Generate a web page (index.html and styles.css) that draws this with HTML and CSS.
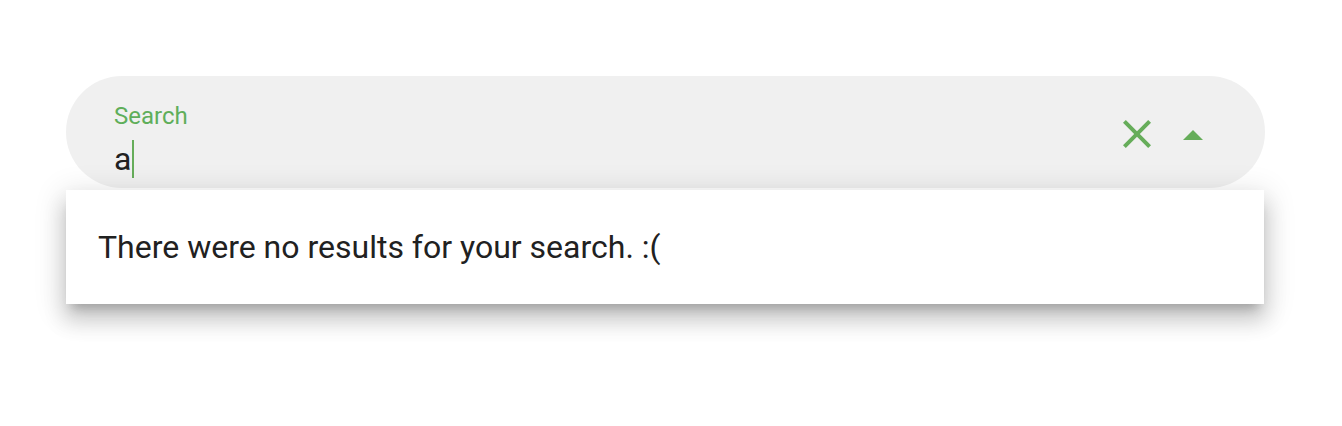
FILE: index.html
```html
<!DOCTYPE html>
<html lang="en">
<head>
<meta charset="utf-8">
<title>Search</title>
<link rel="stylesheet" href="styles.css">
</head>
<body>
<div class="page">
  <div class="field">
    <div class="field-main">
      <label class="field-label">Search</label>
      <div class="field-input"><span class="typed">a</span><span class="caret"></span></div>
    </div>
    <div class="field-icons">
      <span class="icon">
        <svg viewBox="0 0 24 24" width="48" height="48"><path fill="#66ad5a" d="M19,6.41L17.59,5L12,10.59L6.41,5L5,6.41L10.59,12L5,17.59L6.41,19L12,13.41L17.59,19L19,17.59L13.41,12L19,6.41Z"/></svg>
      </span>
      <span class="icon">
        <svg viewBox="0 0 24 24" width="48" height="48"><path fill="#66ad5a" d="M7,15L12,10L17,15H7Z"/></svg>
      </span>
    </div>
  </div>
  <div class="menu">
    <p class="menu-text">There were no results for your search. :(</p>
  </div>
</div>
</body>
</html>
```

FILE: styles.css
```css
html, body {
  margin: 0;
  padding: 0;
  background: #ffffff;
}
body {
  font-family: Roboto, "Liberation Sans", sans-serif;
  color: #212121;
  min-height: 426px;
}
.page {
  padding: 76px 77px 60px 66px;
  display: flex;
  flex-direction: column;
  gap: 2px;
}
.field {
  position: relative;
  z-index: 1;
  height: 112px;
  box-sizing: border-box;
  border-radius: 56px;
  background: #f0f0f0;
  display: flex;
  align-items: center;
  padding: 0 48px;
}
.field-main {
  flex: 1;
  display: flex;
  flex-direction: column;
  gap: 7px;
  padding-top: 18px;
}
.field-label {
  font-size: 24px;
  line-height: 28px;
  color: #5fae5a;
}
.field-input {
  display: flex;
  align-items: center;
  height: 44px;
  font-size: 32px;
}
.typed {
  line-height: 44px;
  color: #212121;
}
.caret {
  width: 2px;
  height: 38px;
  background: #66ad5a;
  margin-left: 1px;
}
.field-icons {
  display: flex;
  gap: 8px;
  align-items: center;
  margin-top: 3px;
}
.icon {
  width: 48px;
  height: 48px;
  display: block;
}
.icon svg {
  display: block;
}
.menu {
  position: relative;
  z-index: 2;
  height: 114px;
  margin-right: 1px;
  background: #ffffff;
  display: flex;
  align-items: center;
  padding: 0 32px;
  box-shadow: 0 10px 10px -6px rgba(0,0,0,.2), 0 16px 20px 2px rgba(0,0,0,.14), 0 6px 28px 4px rgba(0,0,0,.12);
}
.menu-text {
  margin: 0;
  font-size: 32px;
  line-height: 36px;
  color: #212121;
}
```
